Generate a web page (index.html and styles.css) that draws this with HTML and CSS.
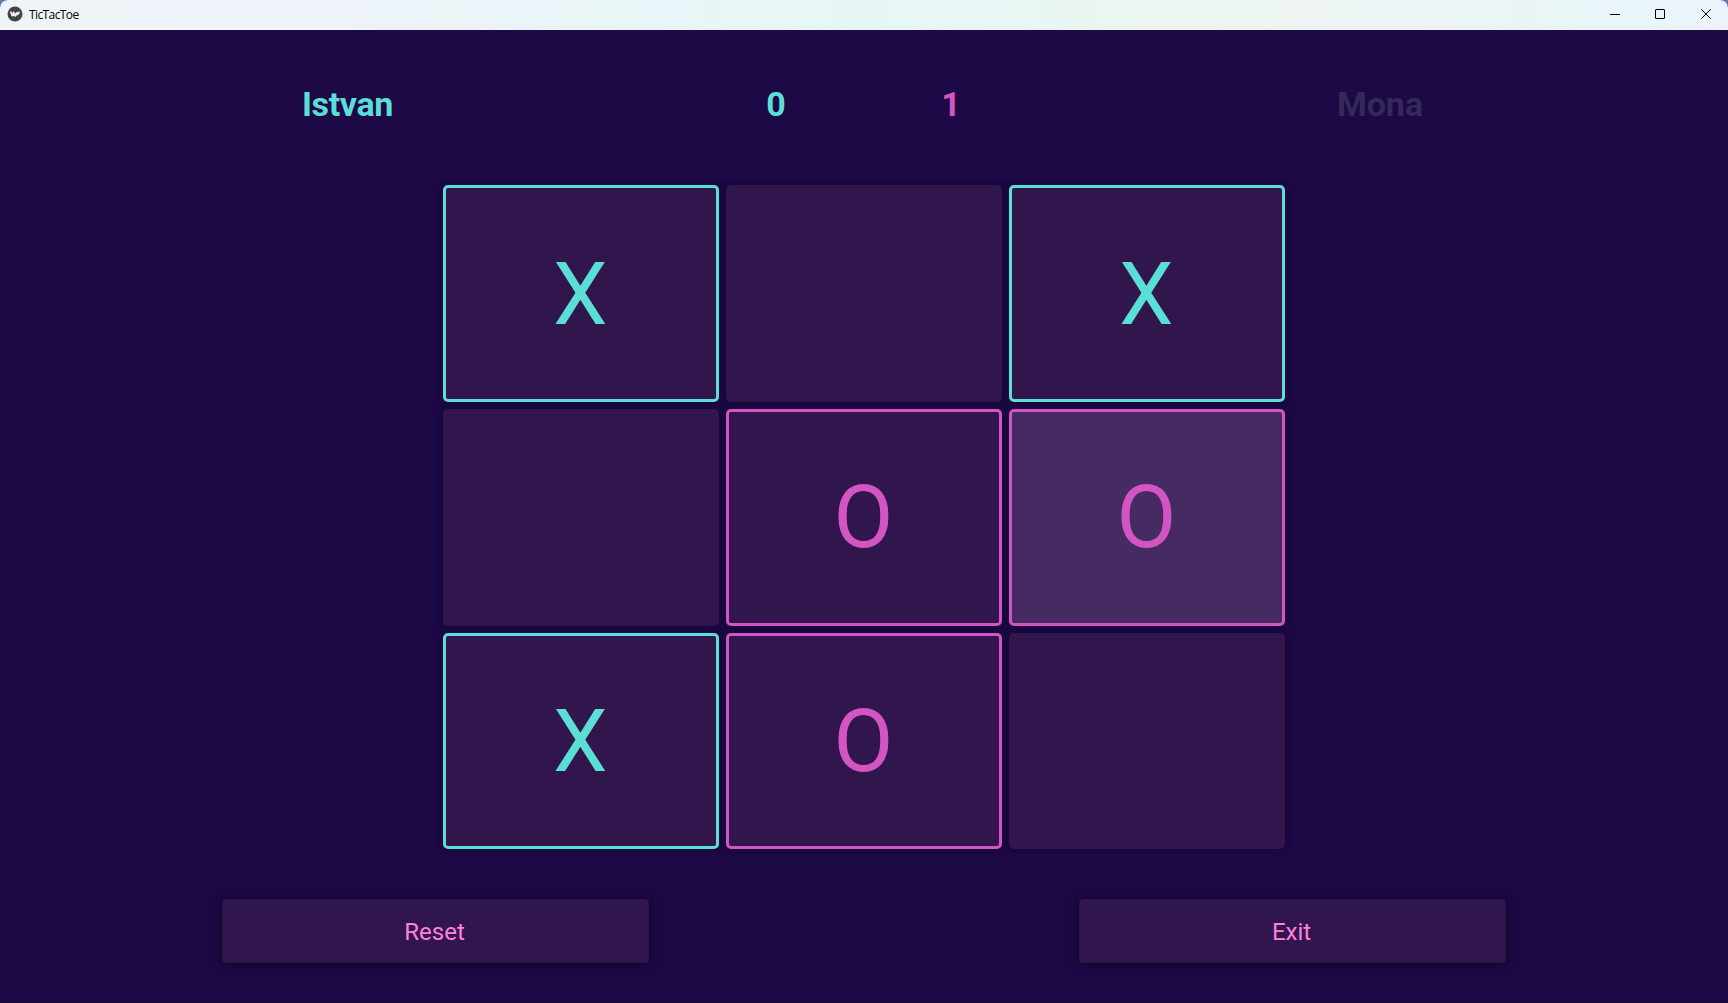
FILE: index.html
```html
<!DOCTYPE html>
<html lang="en">
<head>
<meta charset="utf-8">
<title>TicTacToe</title>
<link rel="stylesheet" href="styles.css">
</head>
<body>
<div class="window">
  <header class="titlebar">
    <svg class="app-icon" viewBox="0 0 16 16"><circle cx="8" cy="8" r="7.5" fill="#414549"/><path d="M2.8 5.4l1.6.2.9 2 .7-2 1.2.1.9 1.7 1.6-1.5 3.6-.3-1.2 1.7.7.3-1.7 1.4-1.5.6-1.2 1.4-1.3-1-1.2.6-1.5-.7-.6-1.7z" fill="#eef1f3"/></svg>
    <span class="title">TicTacToe</span>
    <svg class="controls" viewBox="0 0 120 30" fill="none" stroke="#000"><path d="M2 14.5h10"/><rect x="47.5" y="9.5" width="9" height="9" rx=".5"/><path d="M93.2 9.2l9.6 9.6M102.8 9.2l-9.6 9.6"/></svg>
  </header>
  <main class="game">
    <section class="scores">
      <span class="player x">Istvan</span>
      <span class="x">0</span>
      <span class="score o">1</span>
      <span class="idle">Mona</span>
    </section>
    <section class="board">
      <div class="cell x">X</div>
      <div class="cell"></div>
      <div class="cell x">X</div>
      <div class="cell"></div>
      <div class="cell o">O</div>
      <div class="cell o hover">O</div>
      <div class="cell x">X</div>
      <div class="cell o">O</div>
      <div class="cell"></div>
    </section>
    <footer class="actions">
      <button class="btn">Reset</button>
      <button class="btn">Exit</button>
    </footer>
  </main>
</div>
</body>
</html>
```
FILE: styles.css
```css
* { box-sizing: border-box; }
body { margin: 0; background: #5b7fa8; font-family: Roboto, sans-serif; }
.window {
  height: 1003px;
  display: flex;
  flex-direction: column;
  overflow: hidden;
  border-radius: 8px 8px 0 0;
  background: #1c0945;
}
.titlebar {
  flex: 0 0 30px;
  display: flex;
  align-items: center;
  padding-left: 7px;
  background: linear-gradient(90deg, #eff4f9 0%, #eef4f9 20%, #e6f6f7 50%, #ecf5f0 68%, #edf4f3 76%, #ebf4f7 85%, #e9f5f8 94%, #ecf3fb 100%);
}
.app-icon { width: 16px; height: 16px; margin-top: -2px; }
.title {
  margin: -1px auto 0 6px;
  font: 12px/16px "Open Sans", sans-serif;
  letter-spacing: -0.6px;
  color: #000;
}
.controls { width: 120px; height: 30px; }
.game {
  flex: 1;
  display: flex;
  flex-direction: column;
  align-items: center;
  border-bottom: 1px solid #150736;
}
.scores {
  width: 100%;
  height: 155px;
  display: grid;
  grid-template-columns: 681px 176px 176px 681px;
  padding: 0 7px 8px;
  place-items: center;
  font-size: 34px;
  font-weight: 700;
  line-height: 40px;
}
.player { letter-spacing: -0.35px; }
.score { padding-right: 2px; }
.x { color: #5bded5; }
.o { color: #d355c4; }
.idle { padding-right: 1px; color: #35285a; }
.board {
  width: 842px;
  height: 664px;
  display: grid;
  grid-template: 217px 216.6px 216.4px / repeat(3, 1fr);
  gap: 7px;
}
.cell {
  display: flex;
  align-items: center;
  justify-content: center;
  padding: 0.2px 1.4px 0 0;
  border-radius: 5px;
  background: #31154d;
  box-shadow: 0 1px 7px rgba(15, 5, 35, .45);
  font-size: 87px;
  line-height: 102px;
}
.cell.x, .cell.o { border: 3px solid currentColor; }
.hover { background: #462a62; }
.actions {
  width: 1284px;
  margin-top: 50px;
  display: flex;
  justify-content: space-between;
}
.btn {
  width: 427px;
  height: 64px;
  padding: 2px 2px 0 0;
  border: 1px solid #2c1249;
  border-radius: 4px;
  background: #31154d;
  box-shadow: 0 2px 12px rgba(10, 4, 25, .65);
  color: #ff80dc;
  font: 24px/28px Roboto, sans-serif;
}
```
